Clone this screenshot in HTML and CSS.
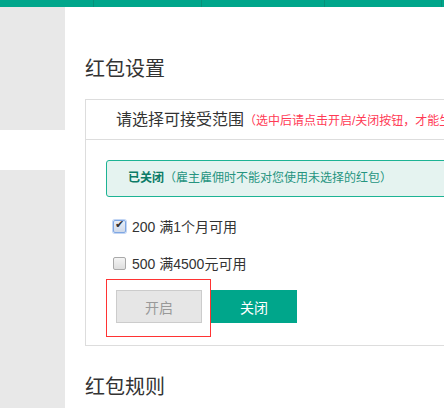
FILE: index.html
```html
<!DOCTYPE html>
<html lang="zh-CN">
<head>
    <meta charset="UTF-8">
    <meta name="viewport" content="width=device-width, initial-scale=1.0">
    <title>红包设置</title>
    <link rel="stylesheet" href="styles.css">
</head>
<body>

    <!-- 顶部导航 -->
    <div class="top-bar">
        <span class="nav-item n1"></span>
        <span class="nav-item n2"></span>
        <span class="nav-item n3"></span>
        <span class="nav-item n4"></span>
    </div>

    <div class="page">
        <!-- 左侧栏 -->
        <div class="side">
            <div class="side-block first"></div>
            <div class="side-block second"></div>
        </div>

        <!-- 主内容 -->
        <div class="main">
            <h2 class="title">红包设置</h2>
            <div class="panel">
                <div class="panel-head">
                    请选择可接受范围<span class="hint">（选中后请点击开启/关闭按钮，才能生效）</span>
                </div>
                <div class="panel-body">
                    <div class="notice"><strong>已关闭</strong>（雇主雇佣时不能对您使用未选择的红包）</div>
                    <label class="check-row">
                        <input type="checkbox" class="check focus" checked>
                        <span>200 满1个月可用</span>
                    </label>
                    <label class="check-row">
                        <input type="checkbox" class="check">
                        <span>500 满4500元可用</span>
                    </label>
                    <div class="buttons">
                        <div class="mark">
                            <button class="btn btn-off">开启</button>
                        </div>
                        <button class="btn btn-on">关闭</button>
                    </div>
                </div>
            </div>
            <h2 class="title rules">红包规则</h2>
        </div>
    </div>

</body>
</html>
```

FILE: styles.css
```css
body {
    margin: 0;
    padding: 0;
    font-family: "Liberation Sans", "Noto Sans CJK SC", sans-serif;
    color: #333;
    background-color: #fff;
    overflow: hidden;
}
.top-bar {
    height: 7px;
    background-color: #00a68b;
    position: relative;
}
.nav-item {
    position: absolute;
    top: 0;
    width: 1px;
    height: 7px;
    background-color: #07917a;
}
.n1 { left: 93px; }
.n2 { left: 201px; }
.n3 { left: 324px; }
.n4 { left: 441px; }
.page {
    display: flex;
}
.side {
    width: 65px;
    flex-shrink: 0;
}
.side-block {
    background-color: #e8e8e8;
}
.side-block.first {
    height: 123px;
}
.side-block.second {
    margin-top: 40px;
    height: 300px;
}
.main {
    padding-left: 20px;
    width: 560px;
    flex-shrink: 0;
}
.title {
    margin: 0;
    padding-top: 48px;
    font-size: 20px;
    font-weight: normal;
    line-height: 28px;
    color: #333;
}
.panel {
    margin-top: 16px;
    border: 1px solid #ddd;
}
.panel-head {
    height: 39px;
    line-height: 39px;
    padding-left: 30px;
    font-size: 16px;
    white-space: nowrap;
    border-bottom: 1px solid #ddd;
}
.hint {
    font-size: 12px;
    color: #ff3a55;
}
.panel-body {
    padding: 20px 20px 8px;
}
.notice {
    height: 35px;
    line-height: 35px;
    padding-left: 21px;
    border: 1px solid #1db394;
    border-radius: 3px;
    background-color: #e5f3f0;
    color: #26947f;
    font-size: 12px;
}
.notice strong {
    color: #0c7b67;
}
.check-row {
    display: flex;
    align-items: center;
    height: 30px;
    margin-top: 7px;
    padding-left: 7px;
    font-size: 14px;
}
.notice + .check-row {
    margin-top: 14px;
}
.check {
    appearance: none;
    width: 13px;
    height: 13px;
    margin: 0 6px 0 0;
    border: 1px solid #a9a9a9;
    border-radius: 2px;
    background: linear-gradient(#f4f4f4, #dedede);
    position: relative;
}
.check.focus {
    border-color: #7fa7e3;
    box-shadow: 0 0 0 1px #c3d6f4;
    background: linear-gradient(#e9eef7, #cfd9e9);
}
.check:checked::after {
    content: "✔";
    position: absolute;
    left: 1px;
    top: -3px;
    font-size: 11px;
    color: #333;
}
.buttons {
    display: flex;
    align-items: flex-start;
    margin-top: 1px;
}
.mark {
    border: 1px solid #ff3333;
    padding: 10px 8px 13px 9px;
}
.btn {
    width: 86px;
    height: 33px;
    font-size: 14px;
    font-family: inherit;
    border: 1px solid #ccc;
    display: block;
    padding: 0;
    cursor: pointer;
}
.btn-off {
    background-color: #e6e6e6;
    color: #999;
}
.btn-on {
    margin-top: 11px;
    border-color: #00a68b;
    background-color: #00a68b;
    color: #fff;
}
.title.rules {
    padding-top: 27px;
}
```
